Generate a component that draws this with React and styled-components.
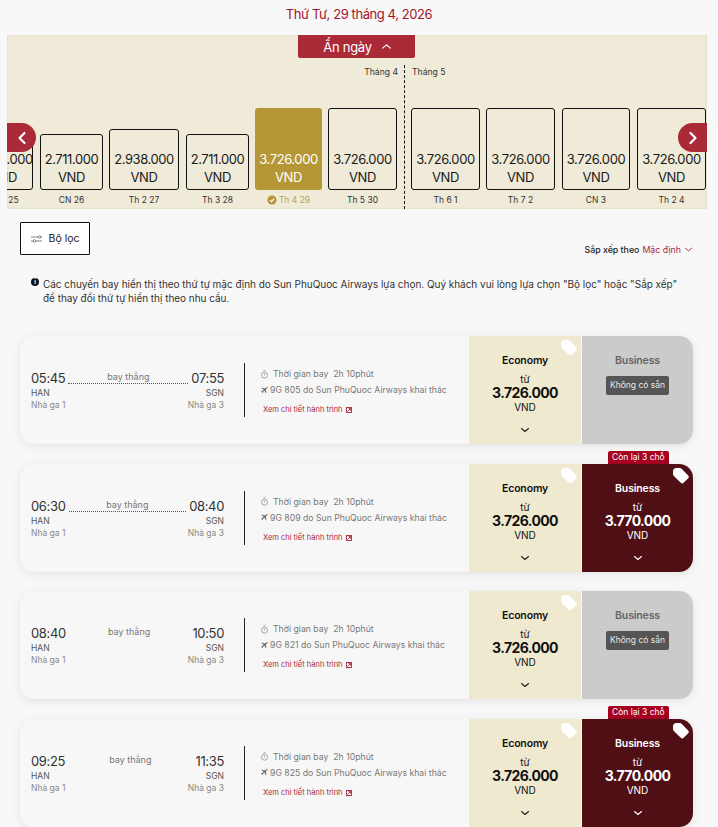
import React from "react";
import styled, { createGlobalStyle } from "styled-components";

const Global = createGlobalStyle`
  html, body { margin: 0; padding: 0; background: #f8f8f8; }
  body { font-family: Inter, "Noto Sans", sans-serif; color: #111; overflow: hidden; }
  * { box-sizing: border-box; }
`;
const Page = styled.div`
  width: 718px; height: 827px; overflow: hidden; display: flex; flex-direction: column;
`;
const DateTitle = styled.h1`
  margin: 0; height: 35px; padding-top: 6px; text-align: center; font-size: 13px; line-height: 17px;
  font-weight: 400; color: #a4132c; letter-spacing: -.42px;
`;
const Panel = styled.section`
  position: relative; margin: 0 11px 0 7px; height: 174px; background: #f0ead8; overflow: hidden;
  display: flex; flex-direction: column; align-items: center;
  box-shadow: inset 0 0 2px #d8d0b8;
`;
const Toggle = styled.button`
  flex: none; width: 117px; height: 23px; margin-right: 1px; border: 0; border-radius: 0 0 2px 2px; padding: 0 0 0 2px;
  background: #ab2a38; color: #fff; font: 400 13px Inter, sans-serif; letter-spacing: -.3px;
  display: flex; align-items: center; justify-content: center; gap: 9px;
`;
const Track = styled.div`
  align-self: stretch; flex: 1; margin-top: 7px; display: flex; align-items: stretch; margin-left: -33px;
`;
const Day = styled.div`
  flex: none; width: ${p => p.$w}px; margin-right: ${p => p.$gap}px;
  display: flex; flex-direction: column; justify-content: flex-end; align-items: center;
`;
const Box = styled.div`
  width: 100%; height: ${p => p.$h}px; border-radius: 3px;
  border: ${p => (p.$active ? "0" : "1px solid #111")};
  background: ${p => (p.$active ? "#b59736" : "transparent")};
  color: ${p => (p.$active ? "#fff" : "#1a1a1a")};
  display: flex; flex-direction: column; justify-content: flex-end; align-items: center;
  padding-bottom: ${p => (p.$active ? "4px" : "3px")}; font-size: 13px; line-height: 18px; letter-spacing: -.42px; white-space: nowrap;
`;
const DayLabel = styled.div`
  height: 19px; display: flex; align-items: center; gap: 2px; font-size: 8.5px; white-space: nowrap;
  color: ${p => (p.$active ? "#b8a25a" : "#333")};
`;
const Divider = styled.div`
  position: relative; flex: none; width: 0; margin: 0 6px 0 0; border-left: 1px dashed #111;
`;
const Month = styled.span`
  position: absolute; top: 1px; font-size: 8.6px; line-height: 12px; color: #333; white-space: nowrap;
  ${p => (p.$side === "left" ? "right: 7px;" : "left: 7px;")}
`;
const Arrow = styled.button`
  position: absolute; top: 88px; width: 29px; height: 29px; border: 0; padding: 0; background: #ab2a38;
  display: flex; align-items: center; justify-content: center;
  ${p => (p.$side === "left"
    ? "left: 0; border-radius: 0 15px 15px 0;"
    : "right: 0; border-radius: 15px 0 0 15px;")}
`;
const ToolRow = styled.div`
  display: flex; justify-content: space-between; padding: 13px 25px 0 20px; height: 68px;
`;
const FilterBtn = styled.button`
  width: 70px; height: 33px; border: 1px solid #111; border-radius: 1px; background: #fff; padding: 0;
  display: flex; align-items: center; justify-content: center; gap: 7px;
  font: 400 10.5px Inter, sans-serif; color: #222;
`;
const Sort = styled.div`
  margin-top: 21px; height: 12px; display: flex; align-items: center; gap: 3px;
  font-size: 8.8px; font-weight: 500; color: #222;
`;
const SortValue = styled.span`
  color: #a4293f; font-weight: 400;
`;
const Notice = styled.div`
  display: flex; gap: 4px; padding: 0 30px 0 31px; height: 59px; font-size: 10px; line-height: 14px; color: #333;
  letter-spacing: -.03px;
`;
const Dot = styled.span`
  flex: none; width: 8px; height: 8px; margin-top: 1px; border-radius: 50%; background: #111; color: #fff;
  font-size: 6px; line-height: 8px; font-weight: 700; text-align: center;
`;
const List = styled.div`
  display: flex; flex-direction: column; gap: 19.6px; padding: 0 25px 0 20px;
`;
const Card = styled.article`
  position: relative; height: 108px; flex: none; display: flex; border-radius: 14px; background: #f7f7f7;
  box-shadow: 0 2px 10px rgba(0,0,0,.09);
`;
const Route = styled.div`
  width: 224px; padding: 34px 20px 0 11px; display: flex; flex-direction: column; flex: none;
`;
const TimeRow = styled.div`
  display: flex; align-items: flex-start; height: 17px; font-size: 13px; line-height: 17px; color: #333; letter-spacing: -.35px;
`;
const Mid = styled.div`
  flex: 1; margin: 0 3px; height: 13px; margin-top: 1px;
  border-bottom: ${p => (p.$line ? "1px dotted #555" : "0")};
  text-align: center; font-size: 9px; line-height: 11px; color: #777; letter-spacing: 0;
`;
const Place = styled.div`
  display: flex; justify-content: space-between; font-size: 8.5px; line-height: 12px; color: ${p => p.$c};
`;
const Sep = styled.div`
  flex: none; width: 1px; height: 54px; margin-top: 27px; background: #1c2230;
`;
const Info = styled.div`
  flex: 1; padding: 31px 0 0 16px; font-size: 8.7px; color: #777; display: flex; flex-direction: column;
`;
const InfoRow = styled.div`
  display: flex; align-items: center; gap: ${p => p.$gap}px; height: 14px; margin-bottom: 2px; white-space: nowrap;
`;
const Detail = styled.a`
  margin: 5px 0 0 2px; display: flex; align-items: center; gap: 3px; font-size: 7.5px; line-height: 12px; color: #a4293f;
`;
const Fare = styled.div`
  position: relative; flex: none; width: ${p => p.$w}px; margin-left: ${p => p.$ml}px;
  background: ${p => p.$bg}; color: ${p => p.$fg};
  border-radius: ${p => (p.$end ? "0 14px 14px 0" : "0")};
  display: flex; flex-direction: column; align-items: center; padding-top: 18px;
`;
const FareName = styled.div`
  font-size: 10.5px; line-height: 14px; font-weight: 600; height: 19px; letter-spacing: -.15px;
`;
const From = styled.div` font-size: 10px; line-height: 12px; `;
const Price = styled.div`
  font-size: 14px; line-height: 15px; font-weight: 700; letter-spacing: -.6px;
`;
const Cur = styled.div` font-size: 10px; line-height: 15px; `;
const Chev = styled.div` margin-top: 10px; height: 10px; display: flex; `;
const NoSeat = styled.div`
  margin-top: 3px; padding: 0 4px; height: 19px; border-radius: 2px; background: #555; color: #e8e8e8;
  font-size: 8.5px; line-height: 19px;
`;
const Seats = styled.div`
  position: absolute; top: -13px; left: 26px; height: 13px; padding: 0 4px; background: #a5001f; color: #fff;
  border-radius: 2px 2px 0 0; font-size: 8.5px; line-height: 13px; white-space: nowrap;
`;
const TagSlot = styled.span`
  position: absolute; top: 3px; right: 3px; line-height: 0;
`;

const Chevron = ({ dir = "down", color = "#222", size = 10 }) => (
  <svg width={size} height={size} viewBox="0 0 10 10" fill="none" stroke={color} strokeWidth="1.1" strokeLinecap="round" strokeLinejoin="round">
    {dir === "down" ? <path d="M1.5 3.5 5 6.5l3.5-3" /> : <path d="M1.5 6.5 5 3.5l3.5 3" />}
  </svg>
);
const ArrowIcon = ({ dir }) => (
  <svg width="12" height="14" viewBox="0 0 12 14" fill="none" stroke="#fff" strokeWidth="2.2" strokeLinecap="round" strokeLinejoin="round">
    {dir === "left" ? <path d="M8.5 2 3.5 7l5 5" /> : <path d="M3.5 2l5 5-5 5" />}
  </svg>
);
const Tag = () => (
  <svg width="18" height="18" viewBox="0 0 18 18" fill="#fff">
    <path d="M1 4.2C1 2.4 2.4 1 4.2 1h3.6c.7 0 1.3.3 1.8.8l6.6 6.6c.8.8.8 2 0 2.8l-4.6 4.6c-.8.8-2 .8-2.8 0L1.8 8.9C1.3 8.4 1 7.8 1 7.1z" />
  </svg>
);
const Clock = () => (
  <svg width="7" height="9" viewBox="0 0 7 9" fill="none" stroke="#8a8f99" strokeWidth=".8">
    <circle cx="3.5" cy="5.2" r="3" /><path d="M3.5 3.6v1.7M2.5.6h2" />
  </svg>
);
const Plane = () => (
  <svg width="7" height="7" viewBox="0 0 7 7" fill="#666">
    <path d="M7 .6 4.8 2.4l.6 3.4-.7.5L3.6 3.6 2 4.8l.1 1-.5.4-.6-1.3L0 4l.5-.3.9.2 1.4-1.5L.4 1.3 1 .8l3.2.7L6.2 0z" />
  </svg>
);
const External = () => (
  <svg width="6" height="6" viewBox="0 0 6 6" fill="none" stroke="#a4293f" strokeWidth=".9">
    <rect x=".5" y=".5" width="5" height="5" /><path d="M1.5 4.5l3-3M2.5 1.5h2v2" />
  </svg>
);
const Sliders = () => (
  <svg width="11" height="8" viewBox="0 0 11 8" fill="none" stroke="#666" strokeWidth=".8">
    <path d="M0 2h7M10 2h1M0 6h2M5 6h6" /><circle cx="8.5" cy="2" r="1.3" /><circle cx="3.5" cy="6" r="1.3" />
  </svg>
);
const Check = () => (
  <svg width="10" height="10" viewBox="0 0 10 10">
    <circle cx="5" cy="5" r="4.6" fill="#b59736" />
    <path d="M2.8 5.1 4.4 6.6 7.2 3.6" fill="none" stroke="#fff" strokeWidth="1.1" />
  </svg>
);

const days = [
  { w: 59, gap: 7, h: 56, p: "3.726.000", l: "Th 7 25" },
  { w: 63, gap: 6, h: 56, p: "2.711.000", l: "CN 26" },
  { w: 70, gap: 7, h: 61, p: "2.938.000", l: "Th 2 27" },
  { w: 63, gap: 6, h: 56, p: "2.711.000", l: "Th 3 28" },
  { w: 67, gap: 6, h: 82, p: "3.726.000", l: "Th 4 29", active: true },
  { w: 69, gap: 7, h: 82, p: "3.726.000", l: "Th 5 30" },
  { divider: true },
  { w: 69, gap: 6, h: 82, p: "3.726.000", l: "Th 6 1" },
  { w: 69, gap: 7, h: 82, p: "3.726.000", l: "Th 7 2" },
  { w: 68, gap: 7, h: 82, p: "3.726.000", l: "CN 3" },
  { w: 69, gap: 0, h: 82, p: "3.726.000", l: "Th 2 4" },
];

const flights = [
  { dep: "05:45", arr: "07:55", code: "9G 805", line: true, biz: null },
  { dep: "06:30", arr: "08:40", code: "9G 809", line: true, biz: "3.770.000" },
  { dep: "08:40", arr: "10:50", code: "9G 821", line: false, biz: null },
  { dep: "09:25", arr: "11:35", code: "9G 825", line: false, biz: "3.770.000" },
];

const FlightCard = ({ f }) => (
  <Card>
    <Route>
      <TimeRow>
        {f.dep}
        <Mid $line={f.line}>bay thẳng</Mid>
        {f.arr}
      </TimeRow>
      <Place $c="#555"><span>HAN</span><span>SGN</span></Place>
      <Place $c="#888"><span>Nhà ga 1</span><span>Nhà ga 3</span></Place>
    </Route>
    <Sep />
    <Info>
      <InfoRow $gap={5}><Clock /> Thời gian bay&nbsp; 2h 10phút</InfoRow>
      <InfoRow $gap={2}><Plane /> {f.code} do Sun PhuQuoc Airways khai thác</InfoRow>
      <Detail>Xem chi tiết hành trình <External /></Detail>
    </Info>
    <Fare $w={112} $ml={0} $bg="#efe9cf" $fg="#111">
      <TagSlot><Tag /></TagSlot>
      <FareName>Economy</FareName>
      <From>từ</From>
      <Price>3.726.000</Price>
      <Cur>VND</Cur>
      <Chev><Chevron /></Chev>
    </Fare>
    {f.biz ? (
      <Fare $w={111} $ml={1} $bg="#4f0f15" $fg="#fff" $end>
        <Seats>Còn lại 3 chỗ</Seats>
        <TagSlot><Tag /></TagSlot>
        <FareName>Business</FareName>
        <From>từ</From>
        <Price>{f.biz}</Price>
        <Cur>VND</Cur>
        <Chev><Chevron color="#fff" /></Chev>
      </Fare>
    ) : (
      <Fare $w={111} $ml={1} $bg="#cbcbcb" $fg="#666" $end>
        <FareName>Business</FareName>
        <NoSeat>Không có sẵn</NoSeat>
      </Fare>
    )}
  </Card>
);

export default function App() {
  return (
    <Page>
      <Global />
      <DateTitle>Thứ Tư, 29 tháng 4, 2026</DateTitle>
      <Panel>
        <Toggle>Ẩn ngày <Chevron dir="up" color="#fff" size={11} /></Toggle>
        <Track>
          {days.map((d, i) =>
            d.divider ? (
              <Divider key={i}>
                <Month $side="left">Tháng 4</Month>
                <Month $side="right">Tháng 5</Month>
              </Divider>
            ) : (
              <Day key={i} $w={d.w} $gap={d.gap}>
                <Box $h={d.h} $active={d.active}>
                  <span>{d.p}</span>
                  <span>VND</span>
                </Box>
                <DayLabel $active={d.active}>
                  {d.active && <Check />}
                  {d.l}
                </DayLabel>
              </Day>
            )
          )}
        </Track>
        <Arrow $side="left"><ArrowIcon dir="left" /></Arrow>
        <Arrow $side="right"><ArrowIcon dir="right" /></Arrow>
      </Panel>
      <ToolRow>
        <FilterBtn><Sliders /> Bộ lọc</FilterBtn>
        <Sort>
          Sắp xếp theo <SortValue>Mặc định</SortValue>
          <Chevron color="#a4293f" size={9} />
        </Sort>
      </ToolRow>
      <Notice>
        <Dot>i</Dot>
        <div>
          Các chuyến bay hiển thị theo thứ tự mặc định do Sun PhuQuoc Airways lựa chọn. Quý khách vui lòng lựa chọn "Bộ lọc" hoặc "Sắp xếp" để thay đổi thứ tự hiển thị theo nhu cầu.
        </div>
      </Notice>
      <List>
        {flights.map(f => <FlightCard key={f.code} f={f} />)}
      </List>
    </Page>
  );
}
